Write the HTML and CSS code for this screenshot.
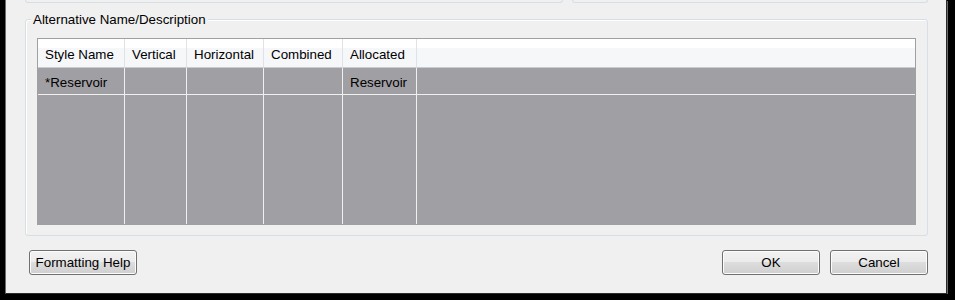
FILE: index.html
```html
<!DOCTYPE html>
<html lang="en">
<head>
    <meta charset="UTF-8">
    <title>Alternative Name/Description</title>
    <link rel="stylesheet" href="styles.css">
</head>
<body>
    <div class="dialog">
        <div class="stubs">
            <div class="stub stub-left"></div>
            <div class="stub stub-right"></div>
        </div>
        <div class="group">
            <span class="group-title">Alternative Name/Description</span>
            <div class="grid">
                <div class="cell head">Style Name</div>
                <div class="cell head">Vertical</div>
                <div class="cell head">Horizontal</div>
                <div class="cell head">Combined</div>
                <div class="cell head">Allocated</div>
                <div class="cell head"></div>

                <div class="cell row">*Reservoir</div>
                <div class="cell row"></div>
                <div class="cell row"></div>
                <div class="cell row"></div>
                <div class="cell row">Reservoir</div>
                <div class="cell row"></div>

                <div class="cell"></div>
                <div class="cell"></div>
                <div class="cell"></div>
                <div class="cell"></div>
                <div class="cell"></div>
                <div class="cell"></div>
            </div>
        </div>
        <div class="buttons">
            <button class="btn btn-help">Formatting Help</button>
            <div class="btn-group">
                <button class="btn btn-ok">OK</button>
                <button class="btn btn-cancel">Cancel</button>
            </div>
        </div>
    </div>
</body>
</html>
```

FILE: styles.css
```css
body {
    margin: 0;
    background-color: #000;
    font-family: "Liberation Sans", Arial, sans-serif;
    font-size: 13.33px;
    color: #000;
}
.dialog {
    margin-left: 5px;
    width: 942px;
    height: 294px;
    box-sizing: border-box;
    background-color: #f0f0f0;
    border-left: 1px solid #6d6d6d;
    border-right: 1px solid #2b2b2b;
    border-bottom: 1px solid #2b2b2b;
    box-shadow: 1px 1px 0 #6a6a6a;
}
.stubs {
    display: flex;
    gap: 9px;
    padding-left: 19px;
}
.stub {
    height: 3px;
    box-sizing: border-box;
    border: 1px solid #d5dfe5;
    border-top: none;
    border-radius: 0 0 3px 3px;
}
.stub-left {
    width: 538px;
}
.stub-right {
    width: 356px;
}
.group {
    position: relative;
    margin: 16px 18px 0 19px;
    height: 217px;
    box-sizing: border-box;
    border: 1px solid #d5dfe5;
    border-radius: 3px;
    box-shadow: inset 1px 1px 0 #fff;
    padding: 18px 11px 0 11px;
}
.group-title {
    position: absolute;
    top: -8px;
    left: 5px;
    padding: 0 2px;
    line-height: 15px;
    background-color: #f0f0f0;
}
.grid {
    display: grid;
    grid-template-columns: 87px 62px 77px 79px 74px 1fr;
    grid-template-rows: 29px 27px 1fr;
    height: 187px;
    box-sizing: border-box;
    border: 1px solid #a0a0a0;
    background-color: #a09fa4;
}
.cell {
    box-sizing: border-box;
    border-right: 1px solid #f0f0f0;
    padding-left: 7px;
    white-space: nowrap;
}
.cell:nth-child(6n) {
    border-right: none;
}
.head {
    background: linear-gradient(#fff 9px, #f6f7f9 9px);
    border-right-color: #dfe2e6;
    border-bottom: 1px solid #c9cbcf;
    padding-top: 3px;
    line-height: 25px;
}
.row {
    border-bottom: 1px solid #f0f0f0;
    padding-top: 4px;
    line-height: 22px;
}
.buttons {
    display: flex;
    justify-content: space-between;
    margin: 14px 18px 0 23px;
}
.btn-group {
    display: flex;
    gap: 10px;
}
.btn {
    height: 25px;
    padding: 0;
    font: inherit;
    color: #000;
    border: 1px solid #707070;
    border-radius: 3px;
    background: linear-gradient(#f2f2f2, #ebebeb 50%, #dddddd 50%, #cfcfcf);
    box-shadow: inset 0 0 0 1px #fcfcfc;
}
.btn-help {
    width: 108px;
}
.btn-ok,
.btn-cancel {
    width: 98px;
}
```
